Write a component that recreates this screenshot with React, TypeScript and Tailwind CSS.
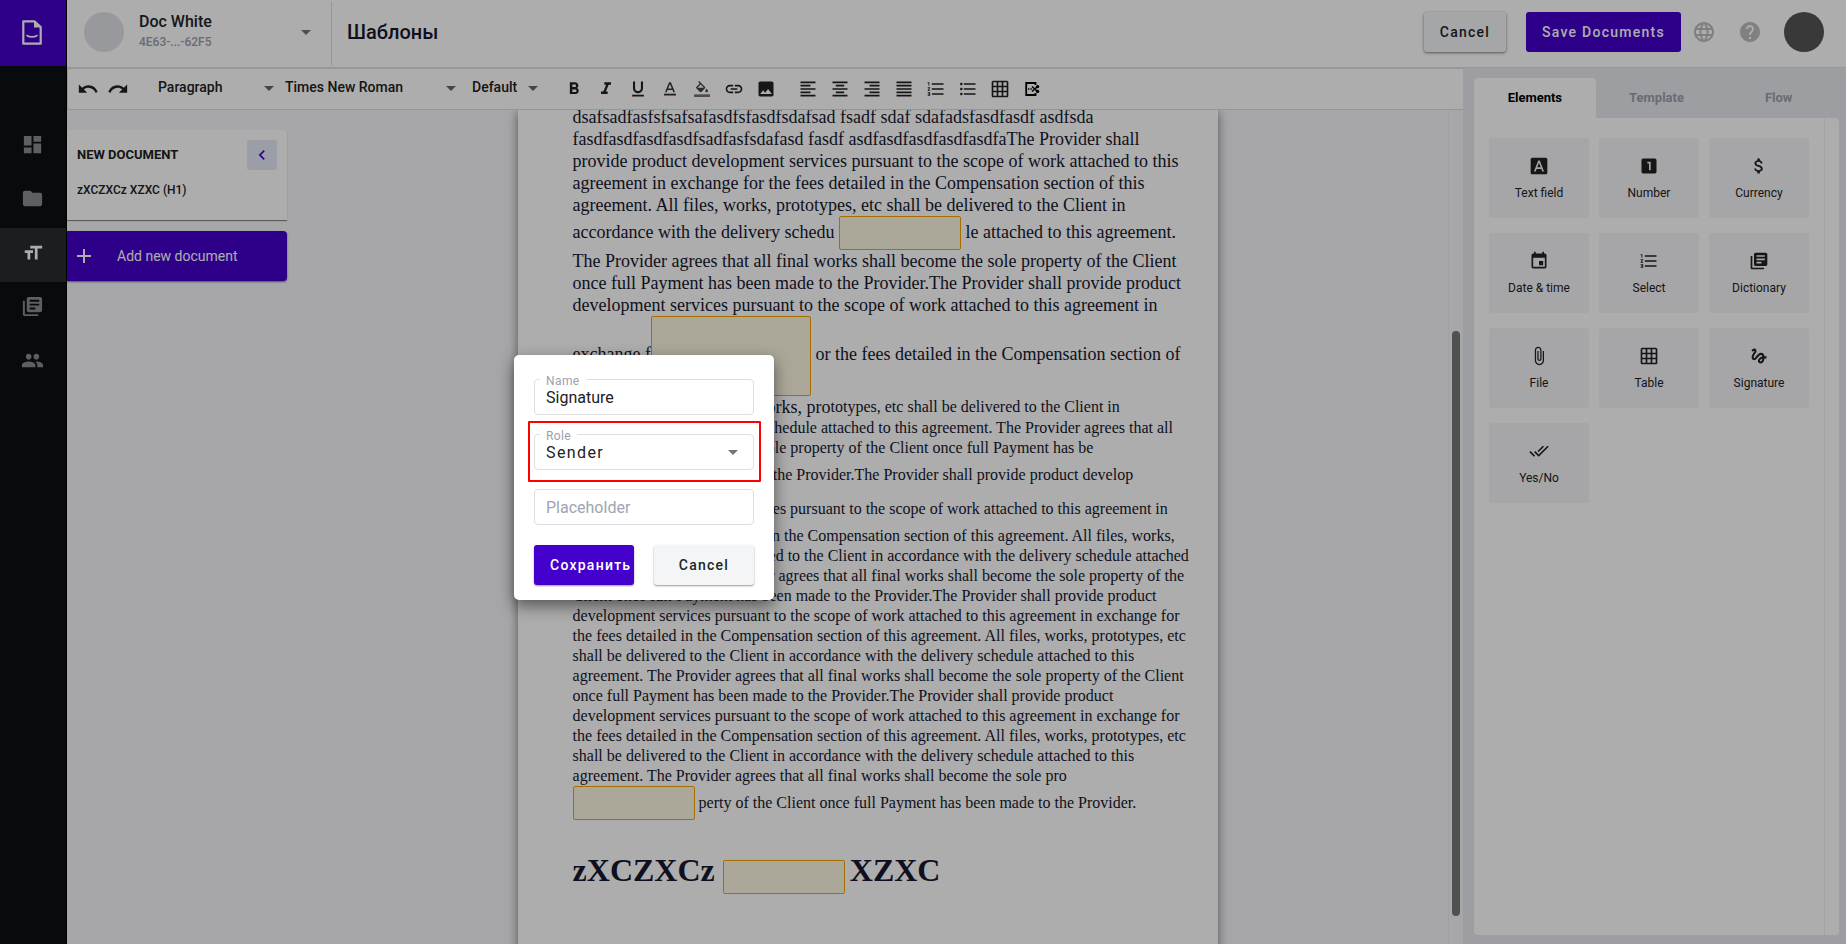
import React from "react";
import {
  MdDashboard, MdFolder, MdFormatSize, MdLibraryBooks, MdPeople, MdArrowDropDown, MdLanguage, MdHelp,
  MdFormatBold, MdFormatItalic, MdFormatUnderlined, MdLink, MdImage,
  MdFormatAlignLeft, MdFormatAlignCenter, MdFormatAlignRight, MdFormatAlignJustify, MdFormatListNumbered,
  MdFormatListBulleted, MdGridOn, MdFontDownload, MdLooksOne, MdAttachMoney, MdEvent, MdAttachFile,
  MdGesture, MdDoneAll, MdAdd, MdChevronLeft,
} from "react-icons/md";

const NAV = [
  { Icon: MdDashboard, active: false },
  { Icon: MdFolder, active: false },
  { Icon: MdFormatSize, active: true },
  { Icon: MdLibraryBooks, active: false },
  { Icon: MdPeople, active: false },
];

const ELEMENTS = [
  { Icon: MdFontDownload, label: "Text field" },
  { Icon: MdLooksOne, label: "Number" },
  { Icon: MdAttachMoney, label: "Currency" },
  { Icon: MdEvent, label: "Date & time" },
  { Icon: MdFormatListNumbered, label: "Select" },
  { Icon: MdLibraryBooks, label: "Dictionary" },
  { Icon: MdAttachFile, label: "File" },
  { Icon: MdGridOn, label: "Table" },
  { Icon: MdGesture, label: "Signature" },
  { Icon: MdDoneAll, label: "Yes/No" },
];

const TextColor = ({ size }: { size: number }) => (
  <svg width={size} height={size} viewBox="0 0 20 20" fill="none" stroke="#333">
    <path d="M5.8 13.2L9.6 4H10.4L14.2 13.2M7.2 10.3H12.8" strokeWidth="1.5" />
    <path d="M4 15.6H16" strokeWidth="1.8" />
  </svg>
);

const FillColor = ({ size }: { size: number }) => (
  <svg width={size} height={size} viewBox="-3 -3 30 30" fill="#444">
    <path d="M16.56 8.94L7.62 0 6.21 1.41l2.38 2.38-5.15 5.15c-.59.59-.59 1.54 0 2.12l5.5 5.5c.29.29.68.44 1.06.44s.77-.15 1.06-.44l5.5-5.5c.59-.58.59-1.53 0-2.12zM5.21 10L10 5.21 14.79 10H5.21zM19 11.5s-2 2.17-2 3.5c0 1.1.9 2 2 2s2-.9 2-2c0-1.33-2-3.5-2-3.5z" />
    <path d="M0 20h24v4H0z" fill="#70717a" />
  </svg>
);

const FORMAT = [MdFormatBold, MdFormatItalic, MdFormatUnderlined, TextColor, FillColor, MdLink, MdImage];
const BLOCKS = [MdFormatAlignLeft, MdFormatAlignCenter, MdFormatAlignRight, MdFormatAlignJustify, MdFormatListNumbered, MdFormatListBulleted, MdGridOn];

function Logo() {
  return (
    <svg width="20" height="25" viewBox="0 0 20 25" className="-translate-x-px -translate-y-px">
      <path d="M1.3 1.3H12.5L18.7 7V23.7H1.3Z" fill="none" stroke="#fff" strokeWidth="2.2" strokeLinejoin="round" />
      <path d="M12 1V7.5H19Z" fill="#fff" />
      <path d="M4.5 15.2Q10 18.6 15.5 15.2" fill="none" stroke="#fff" strokeWidth="1.8" />
    </svg>
  );
}

function Undo({ flip = false }: { flip?: boolean }) {
  return (
    <svg width="22" height="22" viewBox="0 0 24 24" className={flip ? "-scale-x-100" : ""} fill="#212121">
      <path d="M12.5 8c-2.65 0-5.05.99-6.9 2.6L2 7v9h9l-3.62-3.62c1.39-1.16 3.16-1.88 5.12-1.88 3.54 0 6.55 2.31 7.6 5.5l2.37-.78C21.08 11.03 17.15 8 12.5 8z" />
    </svg>
  );
}

function PageBreak() {
  return (
    <svg width="15" height="16" viewBox="0 0 15 16" className="ml-[3px]">
      <path d="M10.5 4V2H1.2V14H10.5V12" fill="none" stroke="#000" strokeWidth="1.8" />
      <path d="M3 8H4.4M5.4 8H6.8" stroke="#000" strokeWidth="1.4" />
      <path d="M7 5.5L12 10M7 10.5L12 6" stroke="#000" strokeWidth="1.6" />
      <circle cx="12.6" cy="5.6" r="1.7" />
      <circle cx="12.6" cy="10.4" r="1.7" />
    </svg>
  );
}

function Box({ className }: { className: string }) {
  return <span className={"inline-block shrink-0 rounded-[2px] border border-[#f8a300] bg-[#fdf8e3] " + className} />;
}

function Line({ children, className = "h-[22px]" }: { children: React.ReactNode; className?: string }) {
  return <div className={"flex items-center whitespace-pre " + className}>{children}</div>;
}

function Sidebar() {
  return (
    <nav className="flex w-[67px] shrink-0 flex-col border-r border-black bg-[#0e1016]">
      <div className="flex h-[66px] items-center justify-center bg-[#4400cc]"><Logo /></div>
      <div className="mt-[54px] flex flex-col">
        {NAV.map(({ Icon, active }, i) => (
          <div key={i} className={"flex h-[54px] items-center justify-center pr-px pb-[5px] " + (active ? "bg-[#2a2c31] text-white" : "text-[#8b8c8f]")}>
            <Icon size={active ? 22 : 23} />
          </div>
        ))}
      </div>
    </nav>
  );
}

function Header() {
  return (
    <header className="flex h-[68px] shrink-0 items-center border-b border-[#e0e1e3] bg-white pb-[3px]">
      <div className="-mb-[3px] flex h-full items-center border-r border-[#dcdde0] pb-[3px] pl-[17px]">
        <div className="size-10 rounded-full bg-[#dfe2e6]" />
        <div className="ml-[15px] w-[150px]">
          <div className="text-[16px] leading-[20px] font-medium text-[#212529]">Doc White</div>
          <div className="text-[12px] leading-[20px] font-medium text-[#9a9eaa]">4E63-...-62F5</div>
        </div>
        <MdArrowDropDown size={24} className="mr-[13px] ml-[5px] text-[#757575]" />
      </div>
      <h1 className="ml-[15px] text-[20px] font-medium text-[#16182e]">Шаблоны</h1>
      <div className="ml-auto flex items-center">
        <button className="h-10 w-[82px] rounded-[3px] bg-[#f4f5f7] text-[14px] font-medium tracking-[1.25px] text-[#212529] shadow-[0_1px_3px_rgba(0,0,0,0.5)]">Cancel</button>
        <button className="ml-5 h-10 w-[155px] rounded-[3px] bg-[#4400cc] text-[14px] font-medium tracking-[1.25px] text-white">Save Documents</button>
        <MdLanguage size={24} className="ml-[11px] text-[#bdbdbd]" />
        <MdHelp size={24} className="ml-[22px] text-[#bdbdbd]" />
        <div className="mr-[22px] ml-[22px] size-10 rounded-full bg-[#555]" />
      </div>
    </header>
  );
}

function Toolbar() {
  return (
    <div className="flex h-[42px] shrink-0 items-center border-y border-l border-[#dcdde0] bg-white pb-[3px] text-[14px] font-medium text-[#212121]">
      <div className="ml-[9px] flex gap-2 pt-[3px]"><Undo /><Undo flip /></div>
      <span className="ml-[29px] w-[100px]">Paragraph</span>
      <MdArrowDropDown size={24} className="-ml-px text-[#666]" />
      <span className="ml-[4px] w-[154px]">Times New Roman</span>
      <MdArrowDropDown size={24} className="text-[#666]" />
      <span className="ml-[9px] w-[49px]">Default</span>
      <MdArrowDropDown size={24} className="text-[#666]" />
      <div className="ml-[19px] flex items-center gap-[12px] pt-[3px]">
        {FORMAT.map((Icon, i) => <Icon key={i} size={20} />)}
      </div>
      <div className="ml-[22px] flex items-center gap-[12px] pt-[3px]">
        {BLOCKS.map((Icon, i) => <Icon key={i} size={20} />)}
        <PageBreak />
      </div>
    </div>
  );
}

function Outline() {
  return (
    <aside className="w-[220px] pt-5">
      <div className="h-[90px] rounded-tr-[4px] bg-white px-[10px] pt-[10px] shadow-[0_1px_1px_rgba(0,0,0,0.5)]">
        <div className="flex items-center justify-between text-[13px] font-bold text-[#212121]">
          NEW DOCUMENT
          <span className="flex size-[30px] items-center justify-center rounded-[2px] bg-[#e6e9f7] text-[#4400cc]"><MdChevronLeft size={20} /></span>
        </div>
        <div className="mt-[10px] text-[12px] leading-[20px] font-medium text-[#212121]">zXCZXCz XZXC (H1)</div>
      </div>
      <div className="mt-[11px] flex h-[50px] items-center rounded-r-[4px] bg-[#4400cc] pl-[5px] text-[14px] text-white shadow-[0_1px_2px_rgba(0,0,0,0.5)]">
        <MdAdd size={24} />
        <span className="ml-[21px]">Add new document</span>
      </div>
    </aside>
  );
}

function Paper() {
  return (
    <article className="h-[860px] w-[700px] overflow-hidden bg-white pl-[54.6px] font-['Liberation_Serif',serif] text-[#16182e] shadow-[0_2px_10px_rgba(0,0,0,0.5)]">
      <div className="-mt-[4px] text-[18px]">
        <Line>dsafsadfasfsfsafsafasdfsfasdfsdafsad fsadf sdaf sdafadsfasdfasdf asdfsda</Line>
        <Line>fasdfasdfasdfasdfsadfasfsdafasd fasdf asdfasdfasdfasdfasdfaThe Provider shall</Line>
        <Line>provide product development services pursuant to the scope of work attached to this</Line>
        <Line>agreement in exchange for the fees detailed in the Compensation section of this</Line>
        <Line>agreement. All files, works, prototypes, etc shall be delivered to the Client in</Line>
        <Line className="h-[34px]"><span className="pb-[2px]">accordance with the delivery schedu </span><Box className="h-[34px] w-[122px]" /><span className="pb-[2px]"> le attached to this agreement.</span></Line>
        <Line>The Provider agrees that all final works shall become the sole property of the Client</Line>
        <Line>once full Payment has been made to the Provider.The Provider shall provide product</Line>
        <Line>development services pursuant to the scope of work attached to this agreement in</Line>
        <Line className="h-[80px]"><span className="pb-[4px]">exchange f</span><Box className="h-[80px] w-[160px]" /><span className="pb-[4px]"> or the fees detailed in the Compensation section of</span></Line>
        <Line className="h-[22px] items-baseline">this agreement. All files, works, pro<span className="text-[16px]">totypes, etc shall be delivered to the Client in</span></Line>
      </div>
      <div className="text-[16px]">
        <Line className="h-5">accordance with the delivery schedule attached to this agreement. The Provider agrees that all</Line>
        <Line className="h-5">final works shall become the sole property of the Client once full Payment has be</Line>
        <Line className="h-[34px]"><Box className="h-[34px] w-[122px]" /> en made to the Provider.The Provider shall provide product develop</Line>
        <Line className="h-[34px]"><Box className="h-[34px] w-[122px]" /> ment services pursuant to the scope of work attached to this agreement in</Line>
        <Line className="h-5">exchange for the fees detailed in the Compensation section of this agreement. All files, works,</Line>
        <Line className="h-5">prototypes, etc shall be delivered to the Client in accordance with the delivery schedule attached</Line>
        <Line className="h-5">to this agreement. The Provider agrees that all final works shall become the sole property of the</Line>
        <Line className="h-5">Client once full Payment has been made to the Provider.The Provider shall provide product</Line>
        <Line className="h-5">development services pursuant to the scope of work attached to this agreement in exchange for</Line>
        <Line className="h-5">the fees detailed in the Compensation section of this agreement. All files, works, prototypes, etc</Line>
        <Line className="h-5">shall be delivered to the Client in accordance with the delivery schedule attached to this</Line>
        <Line className="h-5">agreement. The Provider agrees that all final works shall become the sole property of the Client</Line>
        <Line className="h-5">once full Payment has been made to the Provider.The Provider shall provide product</Line>
        <Line className="h-5">development services pursuant to the scope of work attached to this agreement in exchange for</Line>
        <Line className="h-5">the fees detailed in the Compensation section of this agreement. All files, works, prototypes, etc</Line>
        <Line className="h-5">shall be delivered to the Client in accordance with the delivery schedule attached to this</Line>
        <Line className="h-5">agreement. The Provider agrees that all final works shall become the sole pro</Line>
        <Line className="h-[34px]"><Box className="h-[34px] w-[122px]" /> perty of the Client once full Payment has been made to the Provider.</Line>
      </div>
      <h2 className="mt-[25px] text-[32px] font-bold">
        <Line className="h-[50px]">zXCZXCz <Box className="mt-[13px] h-[34px] w-[122px]" /><span className="ml-[5px]">XZXC</span></Line>
      </h2>
    </article>
  );
}

function ElementsPanel() {
  return (
    <aside className="flex w-[383px] shrink-0 flex-col bg-[#e7e9ef] pt-[10px] pr-[7px] pb-[9px] pl-[11px]">
      <div className="flex h-10 text-[13px] font-bold text-[#9b9fa9]">
        <div className="flex w-[122px] items-center justify-center rounded-t-[4px] bg-white text-black">Elements</div>
        <div className="flex w-[122px] items-center justify-center">Template</div>
        <div className="flex w-[122px] items-center justify-center pl-px">Flow</div>
      </div>
      <div className="flex flex-1 rounded-b-[4px] rounded-tr-[4px] bg-white">
        <div className="grid w-[350px] grid-cols-[100px_100px_100px] content-start gap-x-[10px] gap-y-[15px] pt-5 pl-[15px]">
          {ELEMENTS.map(({ Icon, label }) => (
            <div key={label} className="flex h-20 flex-col items-center rounded-[2px] bg-[#f5f5f8] pt-[18px] text-[12px] text-[#212121]">
              <Icon size={20} />
              <span className="mt-[8px] leading-[18px]">{label}</span>
            </div>
          ))}
        </div>
        <div className="flex-1 rounded-r-[4px] border-l border-[#f0f0f2]" />
      </div>
    </aside>
  );
}

function Field({ label, children }: { label?: string; children: React.ReactNode }) {
  return (
    <div className="relative flex h-9 items-center justify-between rounded-[4px] border border-[#dedfe2] px-[11px]">
      {label && <span className="absolute -top-[8px] left-[5px] bg-white px-[6px] text-[12px] leading-[18px] tracking-[0.4px] text-[#9ca0ae]">{label}</span>}
      {children}
    </div>
  );
}

function SignatureDialog() {
  return (
    <div className="absolute top-[355px] left-[514px] h-[245px] w-[260px] rounded-[5px] bg-white px-5 pt-6 shadow-[0_6px_16px_rgba(0,0,0,0.5)]">
      <div className="flex flex-col gap-[19px] text-[16px] text-[#212121]">
        <Field label="Name"><span className="pt-[2px]">Signature</span></Field>
        <Field label="Role"><span className="pt-[2px] tracking-[1.4px]">Sender</span><MdArrowDropDown size={24} className="-mr-[3px] text-[#757575]" /></Field>
        <Field><span className="pt-[2px] text-[#a0a4b2]">Placeholder</span></Field>
      </div>
      <div className="mt-5 flex gap-5 text-[14px] font-medium tracking-[1.25px]">
        <button className="h-10 w-[100px] rounded-[3px] bg-[#4400cc] pl-4 text-left whitespace-nowrap text-white shadow-[0_1px_2px_rgba(0,0,0,0.4)]">Сохранить</button>
        <button className="h-10 w-[100px] rounded-[3px] bg-[#f4f5f7] text-[#212529] shadow-[0_1px_2px_rgba(0,0,0,0.4)]">Cancel</button>
      </div>
      <div className="absolute top-[66px] left-[14px] h-[61px] w-[233px] rounded-[1px] border-2 border-[#f00]" />
    </div>
  );
}

export default function App() {
  return (
    <div className="relative flex h-[944px] w-[1846px] overflow-hidden font-[Roboto,sans-serif]">
      <Sidebar />
      <div className="flex min-w-0 flex-1 flex-col">
        <Header />
        <div className="flex min-h-0 flex-1">
          <section className="flex w-[1396px] shrink-0 flex-col bg-[#f6f6f9]">
            <Toolbar />
            <div className="flex min-h-0 flex-1 overflow-hidden">
              <Outline />
              <div className="ml-[231px]"><Paper /></div>
              <div className="ml-auto flex w-[15px] border-l border-[#ececef] pt-[221px] pl-[3px]">
                <div className="h-[585px] w-2 rounded-full bg-[#757876]" />
              </div>
            </div>
          </section>
          <ElementsPanel />
        </div>
      </div>
      <div className="absolute inset-0 bg-black/32" />
      <SignatureDialog />
    </div>
  );
}
